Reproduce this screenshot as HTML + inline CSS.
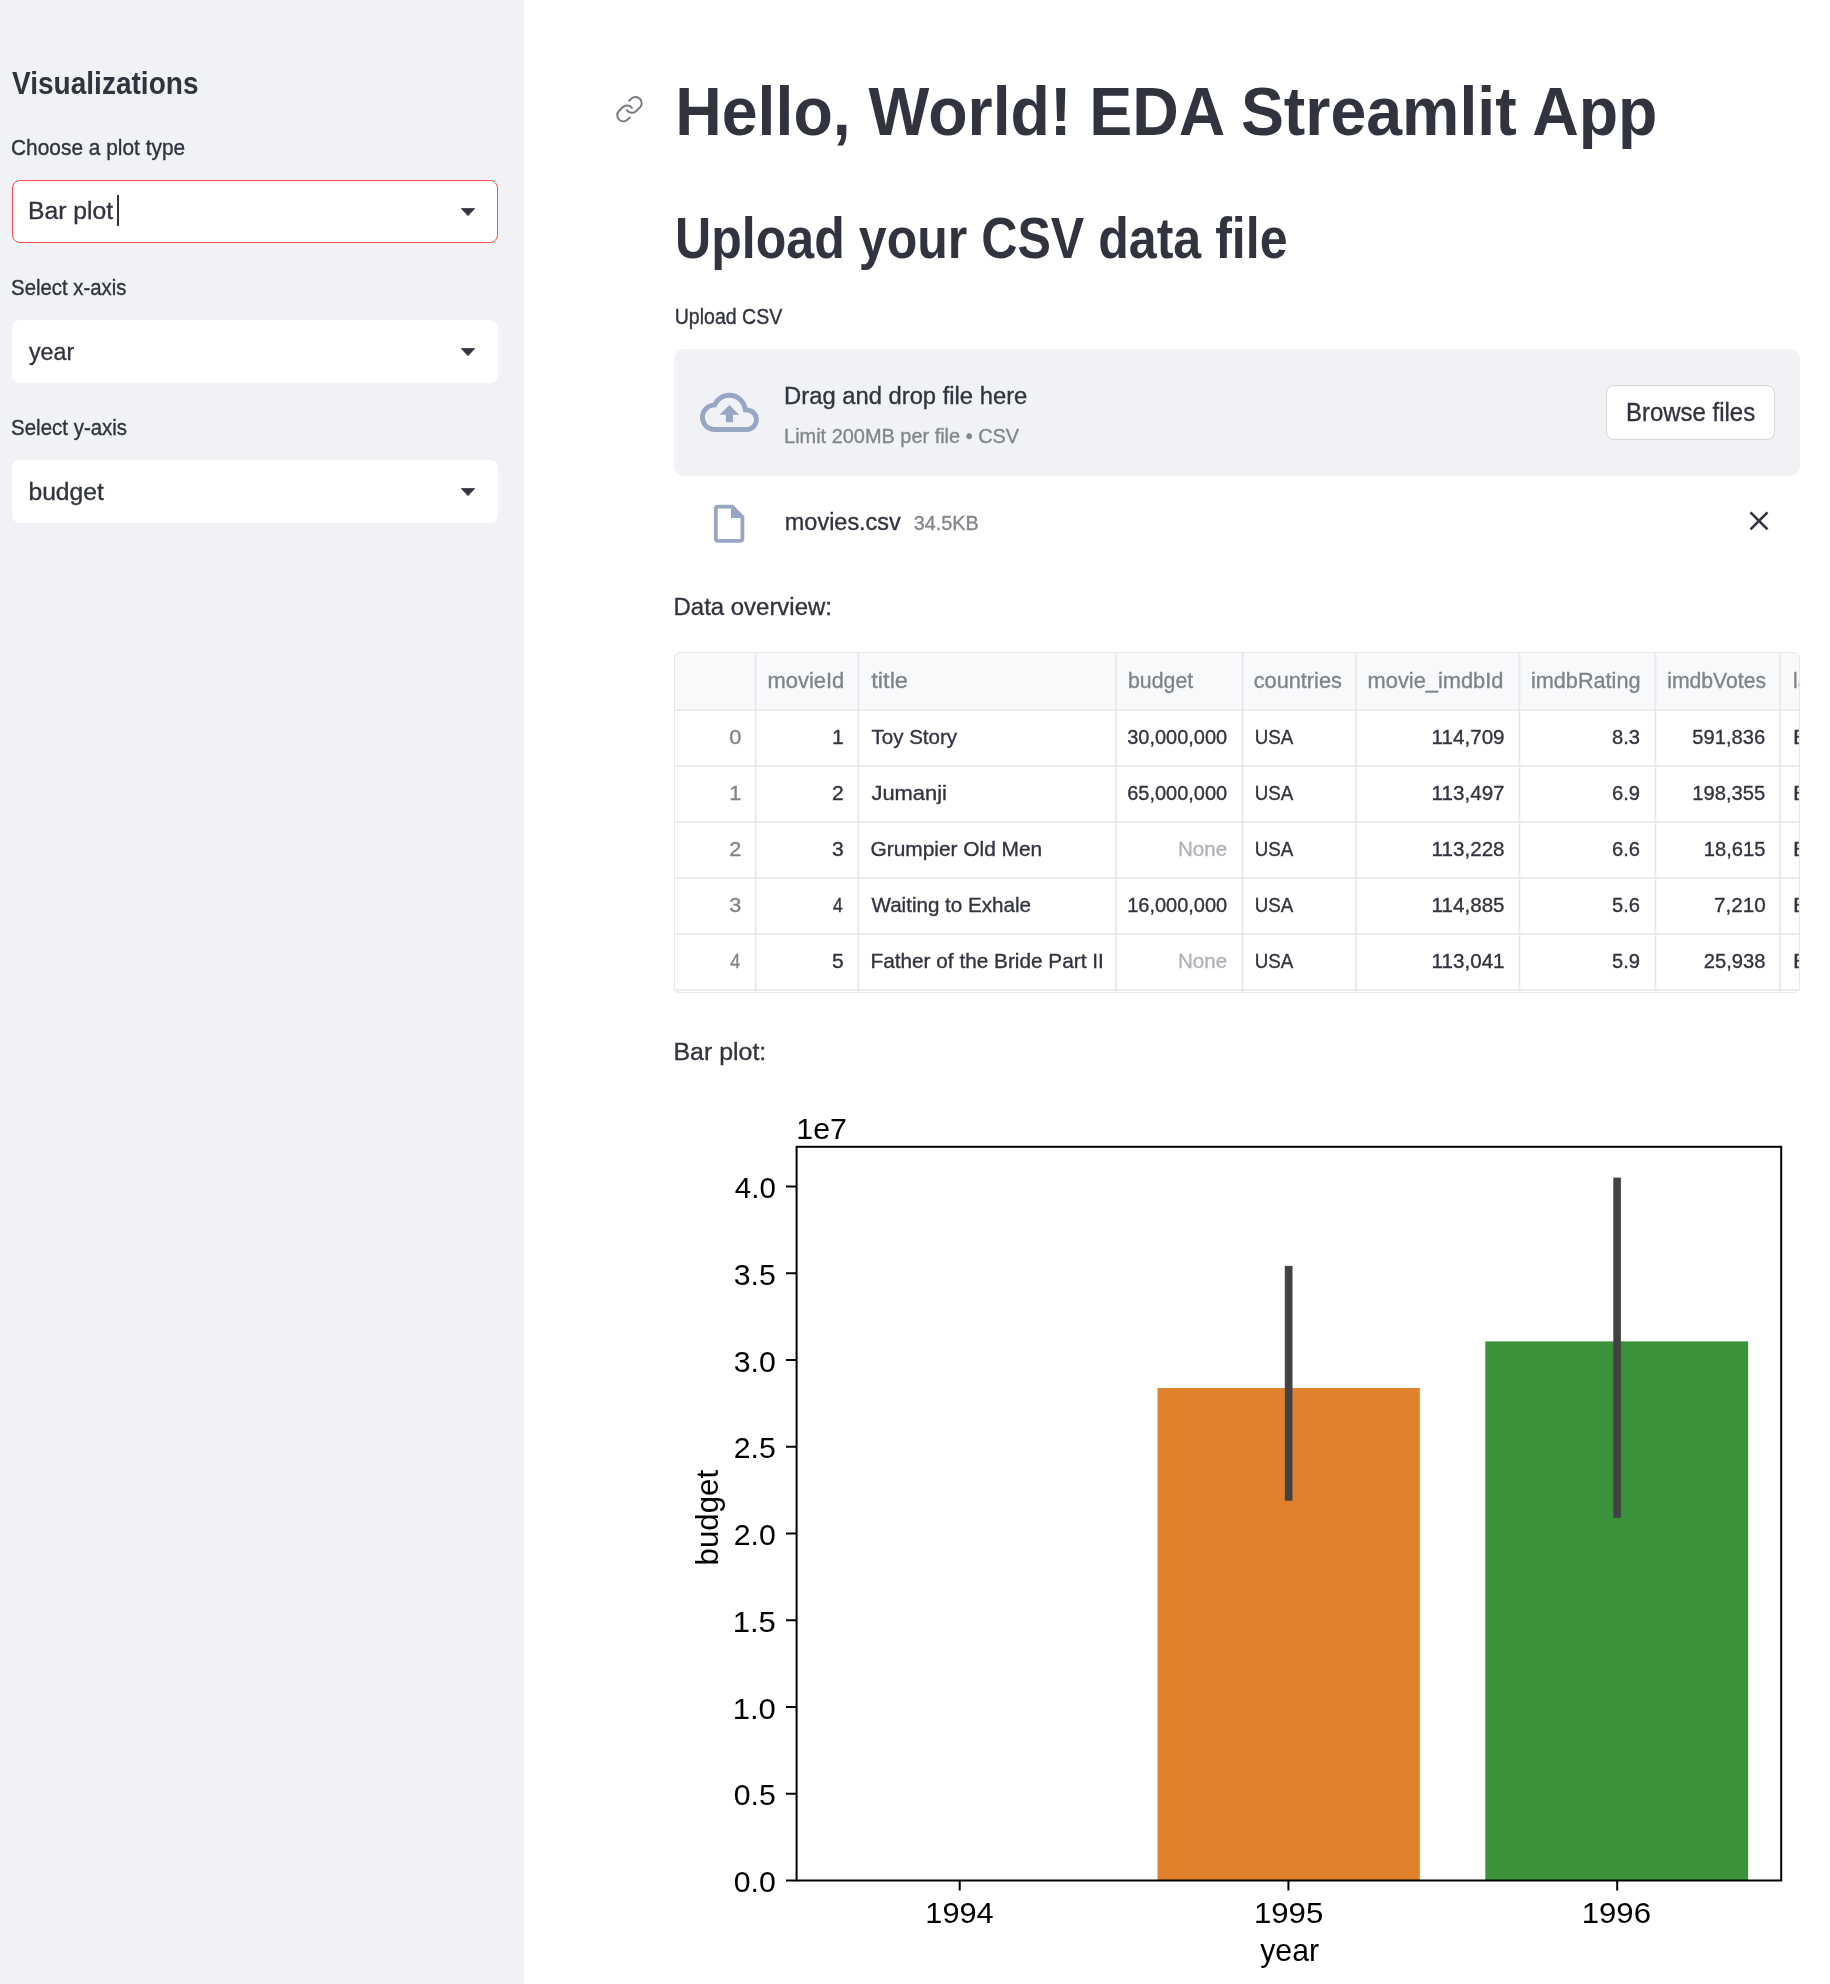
<!DOCTYPE html>
<html><head><meta charset="utf-8"><title>EDA Streamlit App</title>
<style>
html,body{margin:0;padding:0;}
body{width:1830px;height:1984px;overflow:hidden;position:relative;background:#fff;font-family:"Liberation Sans",sans-serif;color:#31333f;}
.abs{position:absolute;box-sizing:border-box;}
#sidebar{left:0;top:0;width:524px;height:1984px;background:#f0f2f6;}
.sel{left:12px;width:486px;height:63px;background:#fff;border-radius:8px;}
.sel.focus{border:1.6px solid #ff4b4b;}
#drop{left:674px;top:349px;width:1126px;height:127px;background:#f0f2f6;border-radius:10px;}
#browse{left:1606px;top:385px;width:169px;height:55px;background:#fff;border:1.6px solid #d6d6d9;border-radius:8px;}
#table{left:674px;top:652px;width:1126px;height:341px;border:1.6px solid #e6e7ea;border-radius:6px;overflow:hidden;background:#fff;}
#thead{left:0;top:0;width:100%;height:58px;background:#f8f9fb;}
svg.ov{position:absolute;left:0;top:0;will-change:transform;}
</style></head>
<body>
<div id="sidebar" class="abs"></div>
<div class="abs sel focus" style="top:180px"></div>
<div class="abs sel" style="top:320px"></div>
<div class="abs sel" style="top:460px"></div>

<div id="drop" class="abs"></div>
<div id="browse" class="abs"></div>

<div id="table" class="abs"><div id="thead" class="abs"></div></div>

<svg class="ov" width="1830" height="1984">
 <defs><clipPath id="tclip"><rect x="674" y="640" width="1124.8" height="360"/></clipPath></defs>
 <!-- select arrows -->
 <g fill="#31333f">
  <path d="M461.5 208.7 L474.5 208.7 L468 215.6 Z" stroke="#31333f" stroke-width="1" stroke-linejoin="round"/>
  <path d="M461.5 348.7 L474.5 348.7 L468 355.6 Z" stroke="#31333f" stroke-width="1" stroke-linejoin="round"/>
  <path d="M461.5 488.7 L474.5 488.7 L468 495.6 Z" stroke="#31333f" stroke-width="1" stroke-linejoin="round"/>
 </g>
 <!-- caret -->
 <rect x="117" y="195" width="2" height="31" fill="#31333f"/>
 <!-- link icon -->
 <g transform="translate(614.7 94.4) scale(1.23)" fill="none" stroke="#767884" stroke-width="1.6" stroke-linecap="round" stroke-linejoin="round">
  <path d="M10 13a5 5 0 0 0 7.54.54l3-3a5 5 0 0 0-7.07-7.07l-1.72 1.71"/>
  <path d="M14 11a5 5 0 0 0-7.54-.54l-3 3a5 5 0 0 0 7.07 7.07l1.71-1.71"/>
 </g>
 <!-- cloud upload -->
 <g transform="translate(700 383) scale(2.45)" fill="#97a6c3">
  <path d="M19.35 10.04C18.67 6.59 15.64 4 12 4 9.11 4 6.6 5.64 5.35 8.04 2.34 8.36 0 10.91 0 14c0 3.31 2.69 6 6 6h13c2.76 0 5-2.24 5-5 0-2.64-2.05-4.78-4.65-4.96zM19 18H6c-2.21 0-4-1.790-4-4 0-2.05 1.53-3.76 3.56-3.97l1.07-.11.5-.95C8.08 7.14 9.94 6 12 6c2.62 0 4.88 1.86 5.39 4.43l.3 1.5 1.53.11c1.56.1 2.78 1.41 2.78 2.96 0 1.65-1.35 3-3 3zM8 13h2.55v3h2.9v-3H16l-4-4z"/>
 </g>
 <!-- file icon -->
 <g transform="translate(706.3 501) scale(1.9)" fill="#97a6c3">
  <path fill-rule="evenodd" d="M14 2H6c-1.1 0-1.99.9-1.99 2L4 20c0 1.1.89 2 1.99 2H18c1.1 0 2-.9 2-2V8l-6-6zM6 20V4h7v5h5v11H6z"/>
 </g>
 <!-- close X -->
 <g stroke="#31333f" stroke-width="2.6">
  <line x1="1750.5" y1="512.3" x2="1767.5" y2="529.3"/>
  <line x1="1767.5" y1="512.3" x2="1750.5" y2="529.3"/>
 </g>
 <!-- table grid -->
 <g stroke="#e6e7ea" stroke-width="1.6">
  <line x1="674" y1="710" x2="1800" y2="710"/>
  <line x1="674" y1="766" x2="1800" y2="766"/>
  <line x1="674" y1="822" x2="1800" y2="822"/>
  <line x1="674" y1="878" x2="1800" y2="878"/>
  <line x1="674" y1="934" x2="1800" y2="934"/>
  <line x1="674" y1="990" x2="1800" y2="990"/>
  <line x1="755.6" y1="652" x2="755.6" y2="992"/>
  <line x1="858.3" y1="652" x2="858.3" y2="992"/>
  <line x1="1115.8" y1="652" x2="1115.8" y2="992"/>
  <line x1="1242.6" y1="652" x2="1242.6" y2="992"/>
  <line x1="1355.8" y1="652" x2="1355.8" y2="992"/>
  <line x1="1519.4" y1="652" x2="1519.4" y2="992"/>
  <line x1="1655.4" y1="652" x2="1655.4" y2="992"/>
  <line x1="1780" y1="652" x2="1780" y2="992"/>
 </g>
 <!-- chart -->
 <rect x="1157.5" y="1388" width="262.3" height="492.5" fill="#e1812c"/>
 <rect x="1485.3" y="1341.4" width="262.8" height="539.1" fill="#3a923a"/>
 <rect x="1284.8" y="1265.9" width="7.7" height="234.8" fill="#424242"/>
 <rect x="1613.3" y="1177.6" width="7.6" height="340.2" fill="#424242"/>
 <rect x="796.6" y="1146.8" width="984.6" height="733.7" fill="none" stroke="#000" stroke-width="2"/>
 <g stroke="#000" stroke-width="2">
<line x1="786" y1="1880.50" x2="796.6" y2="1880.50"/>
<line x1="786" y1="1793.75" x2="796.6" y2="1793.75"/>
<line x1="786" y1="1707.00" x2="796.6" y2="1707.00"/>
<line x1="786" y1="1620.25" x2="796.6" y2="1620.25"/>
<line x1="786" y1="1533.50" x2="796.6" y2="1533.50"/>
<line x1="786" y1="1446.75" x2="796.6" y2="1446.75"/>
<line x1="786" y1="1360.00" x2="796.6" y2="1360.00"/>
<line x1="786" y1="1273.25" x2="796.6" y2="1273.25"/>
<line x1="786" y1="1186.50" x2="796.6" y2="1186.50"/>
<line x1="959.7" y1="1880.5" x2="959.7" y2="1890.5"/>
<line x1="1288.4" y1="1880.5" x2="1288.4" y2="1890.5"/>
<line x1="1617.2" y1="1880.5" x2="1617.2" y2="1890.5"/>
 </g>
 <!-- text -->
 <g style="font-family:'Liberation Sans',sans-serif">
<text x="12.00" y="94.00" font-size="31.977" font-weight="700" fill="#31333f" textLength="186.53" lengthAdjust="spacingAndGlyphs">Visualizations</text>
<text x="11.04" y="155.00" font-size="21.802" font-weight="400" fill="#31333f" stroke="#31333f" stroke-width="0.35" textLength="174.09" lengthAdjust="spacingAndGlyphs">Choose a plot type</text>
<text x="28.00" y="219.00" font-size="24.709" font-weight="400" fill="#31333f" stroke="#31333f" stroke-width="0.35" textLength="85.09" lengthAdjust="spacingAndGlyphs">Bar plot</text>
<text x="11.07" y="295.00" font-size="21.802" font-weight="400" fill="#31333f" stroke="#31333f" stroke-width="0.35" textLength="115.46" lengthAdjust="spacingAndGlyphs">Select x-axis</text>
<text x="29.00" y="360.20" font-size="23.983" font-weight="400" fill="#31333f" stroke="#31333f" stroke-width="0.35" textLength="45.15" lengthAdjust="spacingAndGlyphs">year</text>
<text x="11.06" y="435.00" font-size="21.802" font-weight="400" fill="#31333f" stroke="#31333f" stroke-width="0.35" textLength="116.07" lengthAdjust="spacingAndGlyphs">Select y-axis</text>
<text x="28.47" y="500.20" font-size="23.983" font-weight="400" fill="#31333f" stroke="#31333f" stroke-width="0.35" textLength="75.32" lengthAdjust="spacingAndGlyphs">budget</text>
<text x="675.19" y="135.00" font-size="67.733" font-weight="700" fill="#31333f" textLength="982.26" lengthAdjust="spacingAndGlyphs">Hello, World! EDA Streamlit App</text>
<text x="675.05" y="258.20" font-size="56.686" font-weight="700" fill="#31333f" textLength="612.51" lengthAdjust="spacingAndGlyphs">Upload your CSV data file</text>
<text x="674.69" y="323.80" font-size="21.512" font-weight="400" fill="#31333f" stroke="#31333f" stroke-width="0.35" textLength="107.61" lengthAdjust="spacingAndGlyphs">Upload CSV</text>
<text x="784.07" y="403.80" font-size="24.709" font-weight="400" fill="#31333f" stroke="#31333f" stroke-width="0.35" textLength="243.24" lengthAdjust="spacingAndGlyphs">Drag and drop file here</text>
<text x="784.05" y="443.40" font-size="21.076" font-weight="400" fill="#83858c" stroke="#83858c" stroke-width="0.35" textLength="235.09" lengthAdjust="spacingAndGlyphs">Limit 200MB per file • CSV</text>
<text x="1626.08" y="421.20" font-size="25.000" font-weight="400" fill="#31333f" stroke="#31333f" stroke-width="0.35" textLength="129.05" lengthAdjust="spacingAndGlyphs">Browse files</text>
<text x="784.85" y="530.20" font-size="24.709" font-weight="400" fill="#31333f" stroke="#31333f" stroke-width="0.35" textLength="115.94" lengthAdjust="spacingAndGlyphs">movies.csv</text>
<text x="913.65" y="529.80" font-size="20.930" font-weight="400" fill="#83858c" stroke="#83858c" stroke-width="0.35" textLength="64.95" lengthAdjust="spacingAndGlyphs">34.5KB</text>
<text x="673.56" y="615.20" font-size="24.709" font-weight="400" fill="#31333f" stroke="#31333f" stroke-width="0.35" textLength="158.38" lengthAdjust="spacingAndGlyphs">Data overview:</text>
<text x="673.48" y="1059.90" font-size="24.709" font-weight="400" fill="#31333f" stroke="#31333f" stroke-width="0.35" textLength="92.79" lengthAdjust="spacingAndGlyphs">Bar plot:</text>
<text x="767.51" y="688.20" font-size="22.093" font-weight="400" fill="#80838c" stroke="#80838c" stroke-width="0.35" textLength="76.80" lengthAdjust="spacingAndGlyphs">movieId</text>
<text x="871.30" y="688.20" font-size="22.093" font-weight="400" fill="#80838c" stroke="#80838c" stroke-width="0.35" textLength="36.68" lengthAdjust="spacingAndGlyphs">title</text>
<text x="1128.04" y="688.20" font-size="22.093" font-weight="400" fill="#80838c" stroke="#80838c" stroke-width="0.35" textLength="65.11" lengthAdjust="spacingAndGlyphs">budget</text>
<text x="1253.72" y="688.20" font-size="22.093" font-weight="400" fill="#80838c" stroke="#80838c" stroke-width="0.35" textLength="88.17" lengthAdjust="spacingAndGlyphs">countries</text>
<text x="1367.61" y="688.20" font-size="22.093" font-weight="400" fill="#80838c" stroke="#80838c" stroke-width="0.35" textLength="135.84" lengthAdjust="spacingAndGlyphs">movie_imdbId</text>
<text x="1530.92" y="688.20" font-size="22.093" font-weight="400" fill="#80838c" stroke="#80838c" stroke-width="0.35" textLength="109.66" lengthAdjust="spacingAndGlyphs">imdbRating</text>
<text x="1667.24" y="688.20" font-size="22.093" font-weight="400" fill="#80838c" stroke="#80838c" stroke-width="0.35" textLength="98.85" lengthAdjust="spacingAndGlyphs">imdbVotes</text>
<text x="729.27" y="743.80" font-size="21.076" font-weight="400" fill="#80838c" stroke="#80838c" stroke-width="0.35" textLength="12.07" lengthAdjust="spacingAndGlyphs">0</text>
<text x="832.00" y="743.80" font-size="21.076" font-weight="400" fill="#31333f" stroke="#31333f" stroke-width="0.35" textLength="11.72" lengthAdjust="spacingAndGlyphs">1</text>
<text x="871.50" y="743.80" font-size="21.076" font-weight="400" fill="#31333f" stroke="#31333f" stroke-width="0.35" textLength="85.60" lengthAdjust="spacingAndGlyphs">Toy Story</text>
<text x="1127.15" y="743.80" font-size="21.076" font-weight="400" fill="#31333f" stroke="#31333f" stroke-width="0.35" textLength="100.05" lengthAdjust="spacingAndGlyphs">30,000,000</text>
<text x="1254.71" y="743.80" font-size="21.076" font-weight="400" fill="#31333f" stroke="#31333f" stroke-width="0.35" textLength="38.57" lengthAdjust="spacingAndGlyphs">USA</text>
<text x="1431.62" y="743.80" font-size="21.076" font-weight="400" fill="#31333f" stroke="#31333f" stroke-width="0.35" textLength="72.94" lengthAdjust="spacingAndGlyphs">114,709</text>
<text x="1612.04" y="743.80" font-size="21.076" font-weight="400" fill="#31333f" stroke="#31333f" stroke-width="0.35" textLength="28.03" lengthAdjust="spacingAndGlyphs">8.3</text>
<text x="1692.34" y="743.80" font-size="21.076" font-weight="400" fill="#31333f" stroke="#31333f" stroke-width="0.35" textLength="72.79" lengthAdjust="spacingAndGlyphs">591,836</text>
<text x="729.27" y="799.80" font-size="21.076" font-weight="400" fill="#80838c" stroke="#80838c" stroke-width="0.35" textLength="12.07" lengthAdjust="spacingAndGlyphs">1</text>
<text x="832.00" y="799.80" font-size="21.076" font-weight="400" fill="#31333f" stroke="#31333f" stroke-width="0.35" textLength="11.72" lengthAdjust="spacingAndGlyphs">2</text>
<text x="871.50" y="799.80" font-size="21.076" font-weight="400" fill="#31333f" stroke="#31333f" stroke-width="0.35" textLength="75.40" lengthAdjust="spacingAndGlyphs">Jumanji</text>
<text x="1127.15" y="799.80" font-size="21.076" font-weight="400" fill="#31333f" stroke="#31333f" stroke-width="0.35" textLength="100.05" lengthAdjust="spacingAndGlyphs">65,000,000</text>
<text x="1254.71" y="799.80" font-size="21.076" font-weight="400" fill="#31333f" stroke="#31333f" stroke-width="0.35" textLength="38.57" lengthAdjust="spacingAndGlyphs">USA</text>
<text x="1431.62" y="799.80" font-size="21.076" font-weight="400" fill="#31333f" stroke="#31333f" stroke-width="0.35" textLength="72.94" lengthAdjust="spacingAndGlyphs">113,497</text>
<text x="1612.04" y="799.80" font-size="21.076" font-weight="400" fill="#31333f" stroke="#31333f" stroke-width="0.35" textLength="28.03" lengthAdjust="spacingAndGlyphs">6.9</text>
<text x="1692.34" y="799.80" font-size="21.076" font-weight="400" fill="#31333f" stroke="#31333f" stroke-width="0.35" textLength="72.79" lengthAdjust="spacingAndGlyphs">198,355</text>
<text x="729.27" y="855.80" font-size="21.076" font-weight="400" fill="#80838c" stroke="#80838c" stroke-width="0.35" textLength="12.07" lengthAdjust="spacingAndGlyphs">2</text>
<text x="832.00" y="855.80" font-size="21.076" font-weight="400" fill="#31333f" stroke="#31333f" stroke-width="0.35" textLength="11.72" lengthAdjust="spacingAndGlyphs">3</text>
<text x="870.51" y="855.80" font-size="21.076" font-weight="400" fill="#31333f" stroke="#31333f" stroke-width="0.35" textLength="171.71" lengthAdjust="spacingAndGlyphs">Grumpier Old Men</text>
<text x="1178.02" y="855.80" font-size="21.076" font-weight="400" fill="#b0b2b9" stroke="#b0b2b9" stroke-width="0.35" textLength="49.13" lengthAdjust="spacingAndGlyphs">None</text>
<text x="1254.71" y="855.80" font-size="21.076" font-weight="400" fill="#31333f" stroke="#31333f" stroke-width="0.35" textLength="38.57" lengthAdjust="spacingAndGlyphs">USA</text>
<text x="1431.62" y="855.80" font-size="21.076" font-weight="400" fill="#31333f" stroke="#31333f" stroke-width="0.35" textLength="72.94" lengthAdjust="spacingAndGlyphs">113,228</text>
<text x="1612.04" y="855.80" font-size="21.076" font-weight="400" fill="#31333f" stroke="#31333f" stroke-width="0.35" textLength="28.03" lengthAdjust="spacingAndGlyphs">6.6</text>
<text x="1703.84" y="855.80" font-size="21.076" font-weight="400" fill="#31333f" stroke="#31333f" stroke-width="0.35" textLength="61.56" lengthAdjust="spacingAndGlyphs">18,615</text>
<text x="729.27" y="911.80" font-size="21.076" font-weight="400" fill="#80838c" stroke="#80838c" stroke-width="0.35" textLength="12.07" lengthAdjust="spacingAndGlyphs">3</text>
<text x="833.00" y="911.80" font-size="21.076" font-weight="400" fill="#31333f" stroke="#31333f" stroke-width="0.35" textLength="9.77" lengthAdjust="spacingAndGlyphs">4</text>
<text x="871.50" y="911.80" font-size="21.076" font-weight="400" fill="#31333f" stroke="#31333f" stroke-width="0.35" textLength="159.42" lengthAdjust="spacingAndGlyphs">Waiting to Exhale</text>
<text x="1127.15" y="911.80" font-size="21.076" font-weight="400" fill="#31333f" stroke="#31333f" stroke-width="0.35" textLength="100.05" lengthAdjust="spacingAndGlyphs">16,000,000</text>
<text x="1254.71" y="911.80" font-size="21.076" font-weight="400" fill="#31333f" stroke="#31333f" stroke-width="0.35" textLength="38.57" lengthAdjust="spacingAndGlyphs">USA</text>
<text x="1431.62" y="911.80" font-size="21.076" font-weight="400" fill="#31333f" stroke="#31333f" stroke-width="0.35" textLength="72.94" lengthAdjust="spacingAndGlyphs">114,885</text>
<text x="1612.04" y="911.80" font-size="21.076" font-weight="400" fill="#31333f" stroke="#31333f" stroke-width="0.35" textLength="28.03" lengthAdjust="spacingAndGlyphs">5.6</text>
<text x="1714.02" y="911.80" font-size="21.076" font-weight="400" fill="#31333f" stroke="#31333f" stroke-width="0.35" textLength="51.69" lengthAdjust="spacingAndGlyphs">7,210</text>
<text x="730.30" y="967.80" font-size="21.076" font-weight="400" fill="#80838c" stroke="#80838c" stroke-width="0.35" textLength="10.06" lengthAdjust="spacingAndGlyphs">4</text>
<text x="832.00" y="967.80" font-size="21.076" font-weight="400" fill="#31333f" stroke="#31333f" stroke-width="0.35" textLength="11.72" lengthAdjust="spacingAndGlyphs">5</text>
<text x="870.51" y="967.80" font-size="21.076" font-weight="400" fill="#31333f" stroke="#31333f" stroke-width="0.35" textLength="233.25" lengthAdjust="spacingAndGlyphs">Father of the Bride Part II</text>
<text x="1178.02" y="967.80" font-size="21.076" font-weight="400" fill="#b0b2b9" stroke="#b0b2b9" stroke-width="0.35" textLength="49.13" lengthAdjust="spacingAndGlyphs">None</text>
<text x="1254.71" y="967.80" font-size="21.076" font-weight="400" fill="#31333f" stroke="#31333f" stroke-width="0.35" textLength="38.57" lengthAdjust="spacingAndGlyphs">USA</text>
<text x="1431.62" y="967.80" font-size="21.076" font-weight="400" fill="#31333f" stroke="#31333f" stroke-width="0.35" textLength="72.94" lengthAdjust="spacingAndGlyphs">113,041</text>
<text x="1612.04" y="967.80" font-size="21.076" font-weight="400" fill="#31333f" stroke="#31333f" stroke-width="0.35" textLength="28.03" lengthAdjust="spacingAndGlyphs">5.9</text>
<text x="1703.84" y="967.80" font-size="21.076" font-weight="400" fill="#31333f" stroke="#31333f" stroke-width="0.35" textLength="61.56" lengthAdjust="spacingAndGlyphs">25,938</text>
<text x="733.79" y="1892.00" font-size="29.942" font-weight="400" fill="#000000" textLength="42.04" lengthAdjust="spacingAndGlyphs">0.0</text>
<text x="733.79" y="1805.25" font-size="29.942" font-weight="400" fill="#000000" textLength="42.04" lengthAdjust="spacingAndGlyphs">0.5</text>
<text x="732.73" y="1718.50" font-size="29.942" font-weight="400" fill="#000000" textLength="43.12" lengthAdjust="spacingAndGlyphs">1.0</text>
<text x="732.73" y="1631.75" font-size="29.942" font-weight="400" fill="#000000" textLength="43.12" lengthAdjust="spacingAndGlyphs">1.5</text>
<text x="733.79" y="1545.00" font-size="29.942" font-weight="400" fill="#000000" textLength="42.04" lengthAdjust="spacingAndGlyphs">2.0</text>
<text x="733.79" y="1458.25" font-size="29.942" font-weight="400" fill="#000000" textLength="42.04" lengthAdjust="spacingAndGlyphs">2.5</text>
<text x="733.79" y="1371.50" font-size="29.942" font-weight="400" fill="#000000" textLength="42.04" lengthAdjust="spacingAndGlyphs">3.0</text>
<text x="733.79" y="1284.75" font-size="29.942" font-weight="400" fill="#000000" textLength="42.04" lengthAdjust="spacingAndGlyphs">3.5</text>
<text x="734.80" y="1198.00" font-size="29.942" font-weight="400" fill="#000000" textLength="41.02" lengthAdjust="spacingAndGlyphs">4.0</text>
<text x="796.37" y="1138.60" font-size="29.942" font-weight="400" fill="#000000" textLength="50.59" lengthAdjust="spacingAndGlyphs">1e7</text>
<text x="925.35" y="1922.70" font-size="29.942" font-weight="400" fill="#000000" textLength="68.27" lengthAdjust="spacingAndGlyphs">1994</text>
<text x="1253.92" y="1922.70" font-size="29.942" font-weight="400" fill="#000000" textLength="69.32" lengthAdjust="spacingAndGlyphs">1995</text>
<text x="1581.72" y="1922.70" font-size="29.942" font-weight="400" fill="#000000" textLength="69.32" lengthAdjust="spacingAndGlyphs">1996</text>
<text x="1260.20" y="1961.00" font-size="31.250" font-weight="400" fill="#000000" textLength="58.90" lengthAdjust="spacingAndGlyphs">year</text>
<text transform="translate(717.50 1563.40) rotate(-90)" x="-2.00" y="0" font-size="31.250" font-weight="400" fill="#000000" textLength="95.59" lengthAdjust="spacingAndGlyphs">budget</text>
<g clip-path="url(#tclip)"><text x="1793.06" y="688.20" font-size="22.093" font-weight="400" fill="#80838c" stroke="#80838c" stroke-width="0.35" textLength="85.75" lengthAdjust="spacingAndGlyphs">language</text>
<text x="1793.13" y="743.80" font-size="21.076" font-weight="400" fill="#31333f" stroke="#31333f" stroke-width="0.35" textLength="74.04" lengthAdjust="spacingAndGlyphs">English</text>
<text x="1793.13" y="799.80" font-size="21.076" font-weight="400" fill="#31333f" stroke="#31333f" stroke-width="0.35" textLength="74.04" lengthAdjust="spacingAndGlyphs">English</text>
<text x="1793.13" y="855.80" font-size="21.076" font-weight="400" fill="#31333f" stroke="#31333f" stroke-width="0.35" textLength="74.04" lengthAdjust="spacingAndGlyphs">English</text>
<text x="1793.13" y="911.80" font-size="21.076" font-weight="400" fill="#31333f" stroke="#31333f" stroke-width="0.35" textLength="74.04" lengthAdjust="spacingAndGlyphs">English</text>
<text x="1793.13" y="967.80" font-size="21.076" font-weight="400" fill="#31333f" stroke="#31333f" stroke-width="0.35" textLength="74.04" lengthAdjust="spacingAndGlyphs">English</text></g>
 </g>
</svg>
</body></html>
